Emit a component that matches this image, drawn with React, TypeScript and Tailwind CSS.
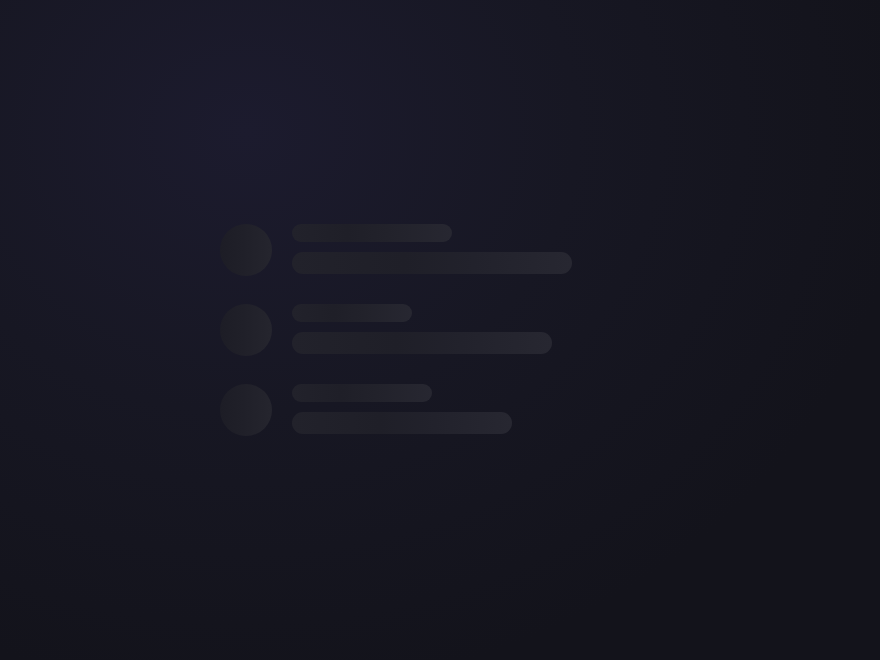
import React from "react";

const rows = [
  { a: 160, b: 280 },
  { a: 120, b: 260 },
  { a: 140, b: 220 },
];

export default function App() {
  return (
    <div className="w-[880px] h-[660px] flex items-center justify-center bg-[radial-gradient(ellipse_75%_85%_at_28%_20%,#1c1b2e_0%,#171723_50%,#13131b_100%)]">
      <div className="w-[440px] flex flex-col gap-[28px]">
        {rows.map((r, i) => (
          <div key={i} className="flex items-start gap-5">
            <div className="w-[52px] h-[52px] rounded-full shrink-0 bg-[linear-gradient(90deg,#1d1d26_0%,#202029_45%,#25252e_100%)]" />
            <div className="flex flex-col gap-[10px]">
              <div
                className="h-[18px] rounded-full bg-[linear-gradient(90deg,#22222b_0%,#1f1f28_35%,#22222b_60%,#272731_100%)]"
                style={{ width: r.a }}
              />
              <div
                className="h-[22px] rounded-full bg-[linear-gradient(90deg,#22222b_0%,#1f1f28_40%,#22222c_65%,#272731_100%)]"
                style={{ width: r.b }}
              />
            </div>
          </div>
        ))}
      </div>
    </div>
  );
}
